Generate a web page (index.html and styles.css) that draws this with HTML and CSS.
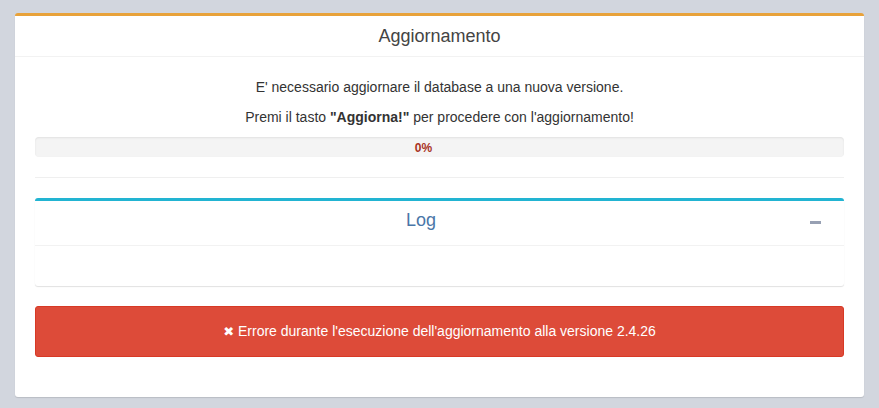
FILE: index.html
```html
<!DOCTYPE html>
<html lang="it">

  <head>
    <meta charset="UTF-8">
    <meta name="viewport" content="width=device-width, initial-scale=1.0">
    <title>Aggiornamento</title>
    <link rel="stylesheet" href="styles.css">
  </head>

  <body>
    <div class="box box-warning">
      <div class="box-header">
        <h3 class="box-title">Aggiornamento</h3>
      </div>

      <div class="box-body">
        <p>E' necessario aggiornare il database a una nuova versione.</p>
        <p>Premi il tasto <b>"Aggiorna!"</b> per procedere con l'aggiornamento!</p>

        <div class="progress">
          <span class="progress-label">0%</span>
        </div>

        <hr>

        <div class="box box-info log-box">
          <div class="box-header">
            <h3 class="box-title log-title">Log</h3>
            <div class="box-tools">
              <span class="btn-box-tool" role="button" aria-label="Riduci">
                <span class="minus"></span>
              </span>
            </div>
          </div>
          <div class="box-body log-body"></div>
        </div>

        <div class="alert alert-danger">
          <span class="alert-icon">&#10006;</span> Errore durante l'esecuzione dell'aggiornamento alla versione 2.4.26
        </div>
      </div>
    </div>
  </body>

</html>
```

FILE: styles.css
```css
body {
  margin: 0;
  padding: 13px 15px;
  background: #d2d6de;
  font-family: "Liberation Sans", Arial, sans-serif;
  font-size: 14px;
  line-height: 20px;
  color: #333;
}

.box {
  background: #fff;
  border-top: 3px solid #d2d6de;
  border-radius: 3px;
  box-shadow: 0 1px 1px rgba(0, 0, 0, 0.12);
}

.box-warning {
  border-top-color: #e8a23a;
}

.box-info {
  border-top-color: #22b4d2;
}

.box-header {
  display: flex;
  align-items: center;
  padding: 10px;
  border-bottom: 1px solid #f2f2f2;
}

.box-title {
  flex: 1;
  margin: 0;
  font-size: 18px;
  font-weight: normal;
  line-height: 20px;
  text-align: center;
  color: #444;
}

.box-body {
  padding: 20px;
  text-align: center;
}

/* intro text */
.box-body p {
  margin: 0 0 10px;
}

.progress {
  height: 20px;
  margin-bottom: 20px;
  padding-right: 32px;
  background: #f4f4f4;
  border-radius: 4px;
  box-shadow: inset 0 1px 2px rgba(0, 0, 0, 0.08);
  text-align: center;
}

.progress-label {
  font-size: 12px;
  font-weight: bold;
  line-height: 20px;
  color: #a8321f;
}

hr {
  margin: 20px 0;
  border: 0;
  border-top: 1px solid #efefef;
}

.log-box {
  margin-bottom: 20px;
  text-align: left;
}

.log-box .box-header {
  align-items: flex-start;
  padding: 9px 10px 15px 10px;
}

.log-title {
  color: #4a76a8;
}

.box-tools {
  width: 37px;
}

.btn-box-tool {
  display: block;
  padding: 11px 0 0 13px;
  cursor: pointer;
}

.minus {
  display: block;
  width: 11px;
  height: 3px;
  background: #97a0b3;
}

.log-body {
  height: 0;
}

.alert {
  padding: 14px 15px;
  margin-bottom: 20px;
  border: 1px solid #d73925;
  border-radius: 3px;
  background: #dd4b39;
  color: #fff;
  text-align: center;
}

.alert-icon {
  font-family: "DejaVu Sans", sans-serif;
  font-size: 13px;
  font-weight: bold;
}
```
